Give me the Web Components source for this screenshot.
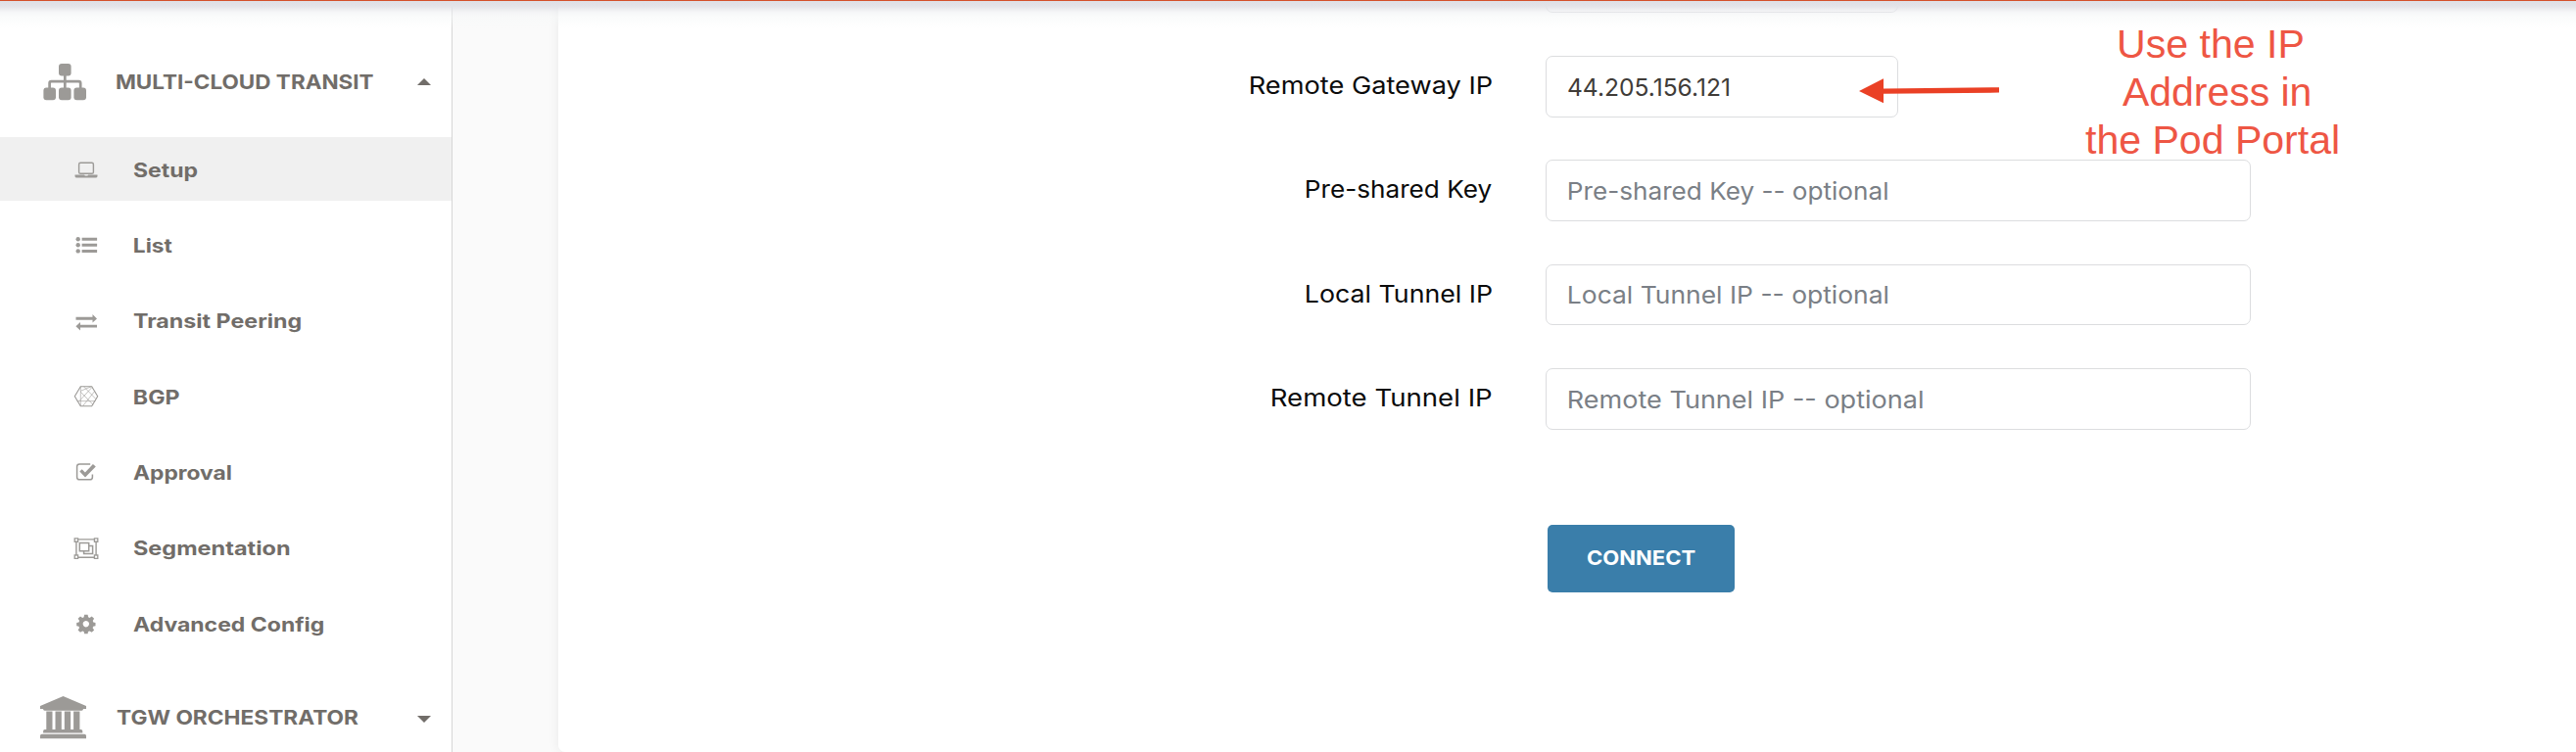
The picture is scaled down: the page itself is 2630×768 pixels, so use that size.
<!DOCTYPE html>
<html lang="en">
<head>
<meta charset="utf-8">
<title>Multi-Cloud Transit Setup</title>
<style>
html,body{margin:0;height:100%;overflow:hidden;background:#fafafa;font-family:Inter,"Liberation Sans",sans-serif}
</style>
</head>
<body>
<transit-app></transit-app>
<script>
const define = (name, html, ready) => {
  const t = document.createElement('template');
  t.innerHTML = html;
  customElements.define(name, class extends HTMLElement {
    constructor() {
      super();
      this.attachShadow({mode: 'open'}).append(t.content.cloneNode(true));
    }
    connectedCallback() { if (ready) ready(this, this.shadowRoot); }
  });
};

/* A one-line text whose visible ink is exactly `w` pixels wide. */
const pen = document.createElement('canvas').getContext('2d');
define('fit-text', `
<style>
:host{display:block;flex:none;white-space:nowrap}
span{display:inline-block;transform-origin:0 50%}
</style><span></span>`, (el, root) => {
  const size = el.getAttribute('size'), weight = el.getAttribute('weight') || 400;
  const family = el.getAttribute('family') || 'Inter';
  const w = +el.getAttribute('w'), text = el.getAttribute('text'), span = root.querySelector('span');
  span.textContent = text;
  span.style.font = weight + ' ' + size + 'px/' + (el.getAttribute('line') || 30) + 'px "' + family + '", sans-serif';
  pen.font = weight + ' ' + size + 'px "' + family + '", sans-serif';
  const m = pen.measureText(text);
  const k = w / (m.actualBoundingBoxRight + m.actualBoundingBoxLeft);
  el.style.width = w + 'px';
  span.style.transform = 'translateX(' + (m.actualBoundingBoxLeft * k) + 'px) scaleX(' + k + ')';
});

const icons = {
  laptop: '<rect x="5.6" y="6.3" width="14.8" height="11" rx="1.6" fill="none" stroke="currentColor" stroke-width="1.4"/><path d="M1.5 18.6h9.7q0 .9 1 .9h1.8q1 0 1-.9h9.5v1.3q0 1.5-2 1.5h-19q-2 0-2-1.5z"/>',
  list: '<circle cx="4.7" cy="7.2" r="2.2"/><circle cx="4.7" cy="13.3" r="2.2"/><circle cx="4.7" cy="19.4" r="2.2"/><path d="M8.6 5.7h15.5v3H8.6zM8.6 11.8h15.5v3H8.6zM8.6 17.9h15.5v3H8.6z"/>',
  exchange: '<path d="M2.5 9.8h17V7l4.5 4.4-4.5 4.2v-2.9h-17zM24 20.5H7v2.9l-4.6-4.2L7 15v2.7h17z"/>',
  bgp: '<g fill="none" stroke="currentColor"><path d="M7.3 3.8h11.4l6 10-6 10H7.3l-6-10z" stroke-width="1.1"/><path d="M7.3 3.8v20M7.3 8.3l10.9-4.5M7.3 9.2L20 22.3M18.7 4.8L6 18.6M10.6 3.8l12.3 12.7M21.6 8.6L9.6 23.6M3.6 18.6h18.8" stroke-width=".6"/></g>',
  check: '<path d="M17.2 5H6.2Q3.6 5 3.6 7.6v10.6q0 2.6 2.6 2.6h10.6q2.6 0 2.6-2.6v-2.7" fill="none" stroke="currentColor" stroke-width="1.5"/><path d="M6.3 12.4l2.4-2.2 3.2 3.2 8-8.5 2.9 2.6L12 18.4z"/>',
  group: '<g fill="none" stroke="currentColor"><path d="M4.6 4.9h16.8M4.6 23.2h16.8M2.9 6.6v15M23.1 6.6v15" stroke-width="1.4"/><path d="M1.2 3.9h3.4v3.4H1.2zM21.4 3.9h3.4v3.4h-3.4zM1.2 20.9h3.4v3.4H1.2zM21.4 20.9h3.4v3.4h-3.4z" stroke-width="1.3"/><path d="M6.3 8.4h9.4v8.3H6.3zM15.8 11.4h3.8v8.2h-9V16.8" stroke-width="1.5"/></g>',
  gear: '<path fill-rule="evenodd" d="M11.1 4.7h3.5l.5 2.6 1.4.6 2.2-1.5 2.4 2.4-1.4 2.2.6 1.5 2.2.4v3.4l-2.3.5-.6 1.4 1.5 2.2-2.4 2.4-2.2-1.4-1.5.6-.4 2.3h-3.5l-.5-2.3-1.4-.6-2.2 1.4-2.4-2.4 1.4-2.2-.5-1.4-2.3-.5v-3.4l2.3-.4.6-1.5-1.5-2.2L7 6.4l2.2 1.5 1.4-.6zM12.8 11a3.2 3.2 0 1 0 .01 0z"/>'
};

define('side-item', `
<style>
:host{display:flex;align-items:center;height:65px;padding-left:74.5px;margin-bottom:12.3px;color:#9c9a97;box-sizing:border-box}
:host([active]){background:#f0f0f0}
svg{width:26px;height:26px;fill:currentColor;margin-right:35px;flex:none}
fit-text{color:#716d69;padding-top:2.8px}
</style><svg viewBox="0 0 26 26"></svg>`, (el, root) => {
  root.querySelector('svg').innerHTML = icons[el.getAttribute('icon')];
  const f = document.createElement('fit-text');
  f.setAttribute('size', 20); f.setAttribute('weight', 650);
  f.setAttribute('w', el.getAttribute('w')); f.setAttribute('text', el.getAttribute('label'));
  f.style.marginLeft = (el.getAttribute('dx') || 0) + 'px';
  root.append(f);
});

define('side-group', `
<style>
:host{display:flex;align-items:center;height:113px;color:#9c9a97;box-sizing:border-box;padding-right:21.5px}
.icon{width:118.6px;flex:none;box-sizing:border-box;padding-left:40px;display:flex}
fit-text{color:#716d69}
.caret{margin-left:auto;width:0;height:0;border:7.2px solid transparent}
.up{border-bottom:7.4px solid #716d69;border-top:0}
.down{border-top:7.4px solid #716d69;border-bottom:0;margin-top:3px}
</style><div class="icon"><slot></slot></div><fit-text></fit-text><div class="caret"></div>`, (el, root) => {
  const old = root.querySelector('fit-text'), f = document.createElement('fit-text');
  f.setAttribute('size', 20.6); f.setAttribute('weight', 650);
  f.setAttribute('w', el.getAttribute('w')); f.setAttribute('text', el.getAttribute('label'));
  old.replaceWith(f);
  root.querySelector('.caret').classList.add(el.getAttribute('caret'));
});

define('side-nav', `
<style>
:host{display:block;flex:none;width:462px;height:768px;box-sizing:border-box;background:#fff;border-right:1px solid #d6d6d6;overflow:hidden;padding-top:27px}
.last{margin-top:-5px}
svg{display:block;fill:currentColor;width:52px;height:46px}
</style>
<side-group label="MULTI-CLOUD TRANSIT" w="261.8" caret="up">
<svg viewBox="40 60 52 46"><rect x="60" y="64" width="12.6" height="12.6" rx="3"/><rect x="44.4" y="88.6" width="12.6" height="12.6" rx="3"/><rect x="60" y="88.6" width="12.6" height="12.6" rx="3"/><rect x="75.4" y="88.6" width="12.6" height="12.6" rx="3"/><path d="M66.3 75v15M50.6 90v-6q0-1.8 1.8-1.8h28q1.8 0 1.8 1.8v6" fill="none" stroke="currentColor" stroke-width="2.7"/></svg>
</side-group>
<side-item active icon="laptop" label="Setup" w="65.4"></side-item>
<side-item icon="list" label="List" w="38.5" dx="1"></side-item>
<side-item icon="exchange" label="Transit Peering" w="171.5"></side-item>
<side-item icon="bgp" label="BGP" w="46.6" dx="1"></side-item>
<side-item icon="check" label="Approval" w="100.5"></side-item>
<side-item icon="group" label="Segmentation" w="160"></side-item>
<side-item icon="gear" label="Advanced Config" w="194.6"></side-item>
<side-group class="last" label="TGW ORCHESTRATOR" w="247.5" caret="down">
<svg viewBox="40 709 52 46"><path d="M64.5 710L88 720v3h-3q0 1.7-1.7 1.7H45.7q-1.7 0-1.7-1.7h-3v-3zM47.3 725.5h6.2v18.5h3v-18.5h6.3v18.5h3v-18.5h6.3v18.5h3v-18.5h6.3v18.5h1.2q1.7 0 1.7 1.7v1.7H44.1v-1.7q0-1.7 1.7-1.7h1.5zM42.7 748.7h43.6q1.7 0 1.7 1.7v2.8H41v-2.8q0-1.7 1.7-1.7z"/></svg>
</side-group>`);

define('form-row', `
<style>
:host{display:flex;height:62.7px;margin-bottom:43.6px;align-items:flex-start}
.label{width:953.3px;display:flex;justify-content:flex-end;color:#0b0b0b;padding-top:15.1px;flex:none}
.box{margin-left:54.7px;box-sizing:border-box;height:62.7px;border:1.3px solid #dcdddf;border-radius:7px;background:#fff;padding:15.8px 0 0 22.6px;color:#7a7f86}
.box.value{color:#403c38;padding-left:21.8px}
</style><div class="label"></div><div class="box"></div>`, (el, root) => {
  const add = (sel, text, w) => {
    if (!text) return;
    const f = document.createElement('fit-text');
    f.setAttribute('size', 24.4); f.setAttribute('w', w); f.setAttribute('text', text);
    f.setAttribute('weight', 400);
    root.querySelector(sel).append(f);
  };
  add('.label', el.getAttribute('label'), el.getAttribute('lw'));
  add('.box', el.getAttribute('value') || el.getAttribute('placeholder'), el.getAttribute('tw'));
  const box = root.querySelector('.box');
  box.style.width = el.getAttribute('box') + 'px';
  box.classList.toggle('value', el.hasAttribute('value'));
});

define('connect-button', `
<style>
:host{display:flex;box-sizing:border-box;width:191px;height:69px;margin:97.3px 0 0 1010px;border-radius:5px;background:#3a7eaa;color:#fff;justify-content:center;align-items:center}
</style><fit-text size="20.4" weight="700" w="110.5" text="CONNECT"></fit-text>`);

define('form-card', `
<style>
:host{display:block;flex:1;margin-left:108px;height:768px;box-sizing:border-box;background:#fff;border-radius:0 0 0 7px;box-shadow:0 0 12px rgba(0,0,0,.07);overflow:hidden}
.rows{margin-top:-49.3px}
</style>
<div class="rows">
<form-row box="360"></form-row>
<form-row label="Remote Gateway IP" lw="246.5" value="44.205.156.121" tw="164" box="360"></form-row>
<form-row label="Pre-shared Key" lw="189.5" placeholder="Pre-shared Key -- optional" tw="325.5" box="720"></form-row>
<form-row label="Local Tunnel IP" lw="189.5" placeholder="Local Tunnel IP -- optional" tw="326" box="720"></form-row>
<form-row label="Remote Tunnel IP" lw="224" placeholder="Remote Tunnel IP -- optional" tw="361.5" box="720"></form-row>
<connect-button></connect-button>
</div>`);

define('help-note', `
<style>
:host{position:absolute;left:1898px;top:20.5px;display:flex;color:#ee5644}
svg{display:block;width:144px;height:30px;margin-top:57.5px}
.lines{margin:.5px 0 0 86.5px;width:258px}
</style>
<svg viewBox="0 0 144 30"><path d="M0 15L25 2.3V12.4L143 11.2V16.6L25 17.8V27.3z" fill="#ea4025"/></svg>
<div class="lines">
<fit-text style="margin-left:35.5px" family="Liberation Sans" size="41" line="49" w="187.5" text="Use the IP"></fit-text>
<fit-text style="margin-left:38px" family="Liberation Sans" size="41" line="49" w="191.5" text="Address in"></fit-text>
<fit-text family="Liberation Sans" size="41" line="49" w="258" text="the Pod Portal"></fit-text>
</div>`);

define('transit-app', `
<style>
:host{display:block;position:relative;width:2630px;height:768px;overflow:hidden;background:#fafafa}
main{display:flex;height:768px}
.top{position:absolute;left:0;right:0;top:0;height:1px;background:#d4502a}
.shade{position:absolute;left:0;right:0;top:1px;height:28px;background:linear-gradient(#dfdfe5,#e3e3e8 18%,rgba(228,228,233,.75) 28%,rgba(238,239,242,.5) 42%,rgba(246,248,248,.5) 58%,rgba(255,255,255,0))}
</style>
<main><side-nav></side-nav><form-card></form-card></main>
<div class="shade"></div><div class="top"></div>
<help-note></help-note>`);
</script>
</body>
</html>
